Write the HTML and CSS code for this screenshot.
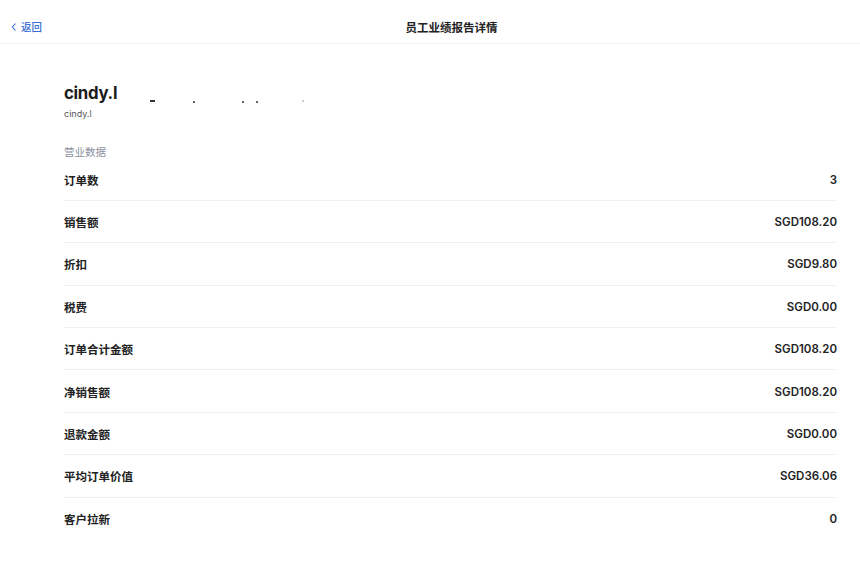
FILE: index.html
```html
<!DOCTYPE html>
<html lang="zh-CN">
<head>
<meta charset="utf-8">
<title>员工业绩报告详情</title>
<link rel="stylesheet" href="styles.css">
</head>
<body>
<header class="topbar">
  <a class="back" href="#">
    <svg class="chev" viewBox="0 0 6 10" width="5" height="8"><path d="M5 1 L1.5 5 L5 9" fill="none" stroke="currentColor" stroke-width="1.4" stroke-linecap="round" stroke-linejoin="round"/></svg>
    <span>返回</span>
  </a>
  <div class="title">员工业绩报告详情</div>
</header>
<main class="content">
  <section class="profile">
    <div class="name-line">
      <span class="name">cindy.l</span>
      <span class="marks"><i class="m dash"></i><i class="m d1"></i><i class="m d2"></i><i class="m d3"></i><i class="m d4"></i></span>
    </div>
    <div class="account">cindy.l</div>
  </section>
  <section class="stats">
    <div class="section-label">营业数据</div>
    <div class="row"><span class="label">订单数</span><span class="value">3</span></div>
    <div class="row"><span class="label">销售额</span><span class="value">SGD108.20</span></div>
    <div class="row"><span class="label">折扣</span><span class="value">SGD9.80</span></div>
    <div class="row"><span class="label">税费</span><span class="value">SGD0.00</span></div>
    <div class="row"><span class="label">订单合计金额</span><span class="value">SGD108.20</span></div>
    <div class="row"><span class="label">净销售额</span><span class="value">SGD108.20</span></div>
    <div class="row"><span class="label">退款金额</span><span class="value">SGD0.00</span></div>
    <div class="row"><span class="label">平均订单价值</span><span class="value">SGD36.06</span></div>
    <div class="row"><span class="label">客户拉新</span><span class="value">0</span></div>
  </section>
</main>
</body>
</html>
```

FILE: styles.css
```css
* { box-sizing: border-box; }
html, body { margin: 0; padding: 0; background: #ffffff; }
body {
  font-family: "Inter", "Noto Sans CJK SC", sans-serif;
  color: #1f1f1f;
  width: 860px;
  height: 571px;
  overflow: hidden;
}
.topbar {
  height: 44px;
  padding-top: 10px;
  display: flex;
  align-items: center;
  border-bottom: 1px solid #f3f3f4;
}
.back {
  display: flex;
  align-items: center;
  gap: 5px;
  padding-left: 11px;
  color: #3b6fd6;
  text-decoration: none;
  font-size: 10.5px;
  font-weight: 500;
  width: 43px;
}
.chev { display: block; }
.title {
  flex: 1;
  text-align: center;
  font-size: 11.5px;
  font-weight: 600;
  color: #222;
}
.content {
  padding: 0 23px 0 64px;
}
.profile {
  padding-top: 38px;
}
.name-line {
  display: flex;
  align-items: flex-end;
  height: 22px;
}
.name {
  font-size: 16.8px;
  font-weight: 700;
  line-height: 22px;
  letter-spacing: -0.3px;
  color: #1c1c1c;
}
.marks {
  position: relative;
  height: 22px;
  width: 200px;
}
.m {
  position: absolute;
  background: #333;
}
.dash { left: 33px; top: 18px; width: 5px; height: 1.5px; }
.d1 { left: 76px; top: 19px; width: 2px; height: 2px; border-radius: 1px; }
.d2 { left: 125px; top: 19px; width: 2px; height: 2px; border-radius: 1px; }
.d3 { left: 139px; top: 19px; width: 2px; height: 2px; border-radius: 1px; }
.d4 { left: 185px; top: 18px; width: 1.5px; height: 1.5px; background: #ccc; }
.account {
  margin-top: 4px;
  font-size: 9px;
  line-height: 12px;
  color: #555;
}
.stats {
  margin-top: 26px;
}
.section-label {
  font-size: 10.5px;
  line-height: 14px;
  color: #8b90a0;
  margin-bottom: -1.5px;
}
.row {
  height: 42.4px;
  display: flex;
  align-items: center;
  justify-content: space-between;
  border-bottom: 1px solid #f1f1f2;
  font-size: 11.5px;
  font-weight: 600;
  color: #222;
}
.row:last-child { border-bottom: none; }
.label { padding-top: 1px; }
.value { padding-top: 1px; }
```
